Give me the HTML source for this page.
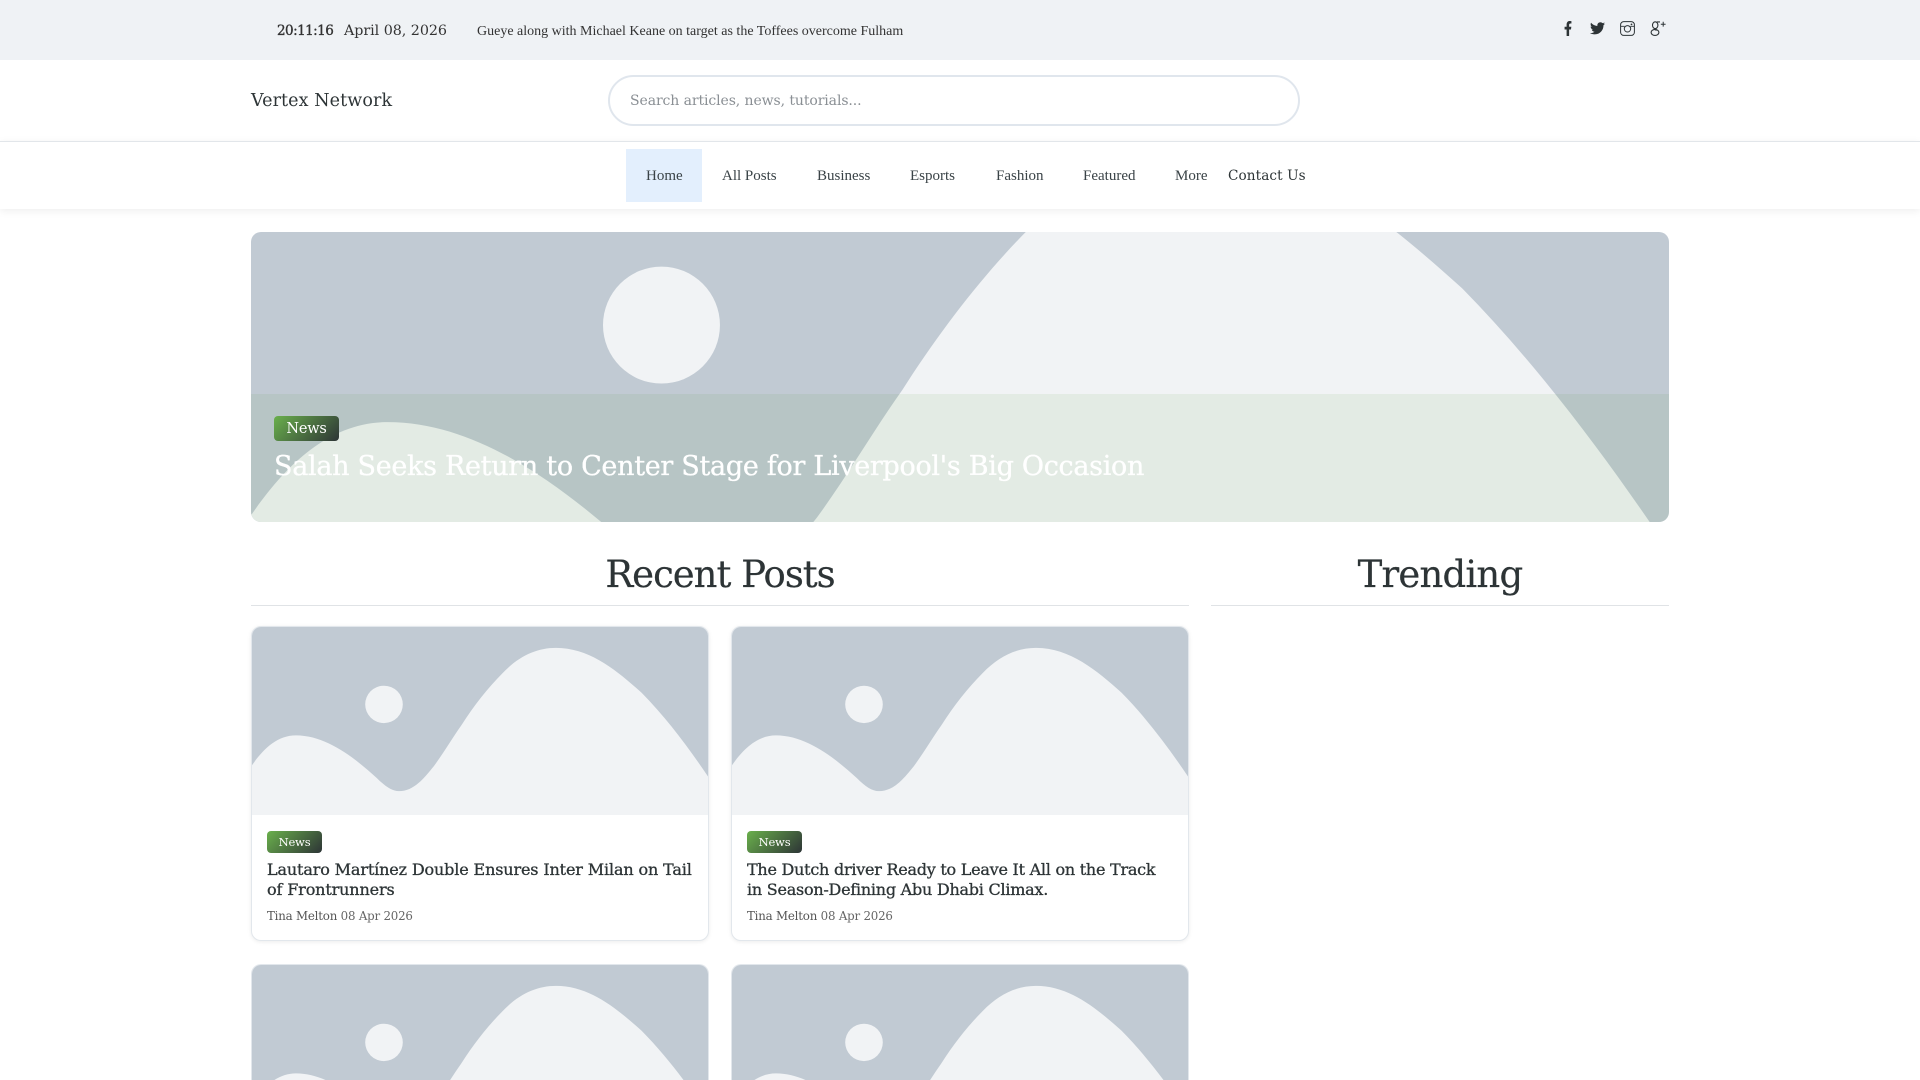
<!DOCTYPE html>
<html lang="en"><head><meta charset="utf-8"><title>Vertex Network</title>
<style>
*{box-sizing:border-box;margin:0;padding:0}
html,body{width:1920px;height:1080px;overflow:hidden;background:#fff}
body{position:relative;font-family:"Liberation Serif",serif;color:#2d3436}
.d{font-family:"DejaVu Serif",serif}
.a{position:absolute;white-space:nowrap}
#top{left:0;top:0;width:1920px;height:60px;background:#eff2f5;box-shadow:0 1px 2px rgba(0,0,0,.04)}
#head{left:0;top:60px;width:1920px;height:81px;background:#fff}
#nav{left:0;top:141px;width:1920px;height:68px;background:#fff;border-top:1px solid #e2e6ea;box-shadow:0 2px 8px rgba(0,0,0,.07)}
#search{left:608px;top:75px;width:692px;height:51px;border:2px solid #e0e6ed;border-radius:26px}
.n{font-size:15px;top:167px;line-height:18px;color:#3a4347}
#home{left:626px;top:149px;width:76px;height:53px;background:#e3effd}
#hero{left:251px;top:232px;width:1418px;height:290px;border-radius:10px;overflow:hidden}
#hero svg{position:absolute;left:0;top:0;width:100%;height:100%;display:block}
#ov{position:absolute;left:0;top:162px;width:100%;height:128px;background:rgba(85,150,55,.085)}
.badge{background:linear-gradient(135deg,#6ab04c,#2d3436);color:#fff;border-radius:4px;text-align:center;font-family:"DejaVu Serif",serif}
h2{font-family:"DejaVu Serif",serif;font-weight:400;font-size:37px;letter-spacing:-1px;color:#2d3436;line-height:44px;text-align:center;position:absolute;top:553px;white-space:nowrap;-webkit-text-stroke:.2px #2d3436}
.rule{height:1px;background:#e0e3e6;top:605px}
.card{width:458px;border:1px solid #e2e7ec;border-radius:10px;background:#fff;box-shadow:0 1px 4px rgba(0,0,0,.08);overflow:hidden}
.card svg{display:block;width:456px;height:188px}
.card.cut{height:116px;border-bottom:0;border-radius:10px 10px 0 0;box-shadow:none}
.card.cut svg{height:115px}
.card .badge{position:absolute;left:15px;top:204px;width:55px;height:22px;font-size:11.5px;line-height:22px;letter-spacing:-.2px}
.card h3{position:absolute;left:15px;top:233px;font-family:"DejaVu Serif",serif;font-weight:400;font-size:16px;line-height:20px;color:#2d3436;white-space:nowrap;-webkit-text-stroke:.3px #2d3436}
.card p{position:absolute;left:15px;top:280px;font-family:"DejaVu Serif",serif;font-size:11.8px;line-height:18px;color:#666;letter-spacing:-.2px;white-space:nowrap}
.card p b{font-weight:400;color:#555}
</style></head><body>
<svg width="0" height="0" style="position:absolute"><defs>
<g id="ph"><rect y="-2" width="456" height="193" fill="#c1cad3"/><circle cx="132" cy="77.8" r="18.8" fill="#f1f3f5"/>
<path fill="#f1f3f5" d="M0 139C11 123 25 109 44 109C74 109 102 131 125 152C133 160 140 165 147 165C162 165 172 152 182 139.7C192 126 200 112 209.5 98.6C222 79 236 61 250.5 46.5C267 29 285 21 304 21C338 21 365 44 389.5 66C415 92 437 122 456.5 151V191H0Z"/></g>
</defs></svg>

<div id="top" class="a"></div>
<div class="a d" style="left:277px;top:22px;font-size:13.5px;line-height:18px;letter-spacing:-.55px;color:#333;-webkit-text-stroke:.35px #333">20:11:16</div>
<div class="a d" style="left:344px;top:22px;font-size:14.3px;line-height:18px;letter-spacing:-.05px;color:#333">April 08, 2026</div>
<div class="a" style="left:477px;top:23px;font-size:14px;line-height:17px;color:#333">Gueye along with Michael Keane on target as the Toffees overcome Fulham</div>

<svg class="a" style="left:1564px;top:21px" width="8" height="15" viewBox="0 0 320 512" preserveAspectRatio="none"><path fill="#2d3436" d="M279.14 288l14.22-92.66h-88.91v-60.13c0-25.35 12.42-50.06 52.24-50.06h40.42V6.26S260.43 0 225.36 0c-73.22 0-121.08 44.38-121.08 124.72v70.62H22.89V288h81.39v224h100.17V288z"/></svg>
<svg class="a" style="left:1590px;top:22px" width="15" height="13" viewBox="0 0 512 430"><path transform="translate(0 -48)" fill="#2d3436" d="M459.37 151.716c.325 4.548.325 9.097.325 13.645 0 138.72-105.583 298.558-298.558 298.558-59.452 0-114.68-17.219-161.137-47.106 8.447.974 16.568 1.299 25.34 1.299 49.055 0 94.213-16.568 130.274-44.832-46.132-.975-84.792-31.188-98.112-72.772 6.498.974 12.995 1.624 19.818 1.624 9.421 0 18.843-1.3 27.614-3.573-48.081-9.747-84.143-51.98-84.143-102.985v-1.299c13.969 7.797 30.214 12.67 47.431 13.319-28.264-18.843-46.781-51.005-46.781-87.391 0-19.492 5.197-37.36 14.294-52.954 51.655 63.675 129.3 105.258 216.365 109.807-1.624-7.797-2.599-15.918-2.599-24.04 0-57.828 46.782-104.934 104.934-104.934 30.213 0 57.502 12.67 76.67 33.137 23.715-4.548 46.456-13.32 66.599-25.34-7.798 24.366-24.366 44.833-46.132 57.827 21.117-2.273 41.584-8.122 60.426-16.243-14.292 20.791-32.161 39.308-52.628 54.253z"/></svg>
<svg class="a" style="left:1620px;top:21px" width="15" height="15" viewBox="0 0 15 15" fill="none" stroke="#2d3436"><rect x=".6" y=".6" width="13.8" height="13.8" rx="3.2" stroke-width="1"/><circle cx="7.5" cy="7.8" r="3.2" stroke-width="1"/><path d="M.8 5.3H4.6M10.4 5.3H14.2" stroke-width=".8"/><circle cx="11.5" cy="3.4" r=".9" fill="#2d3436" stroke="none"/></svg>
<svg class="a" style="left:1650px;top:21px" width="16" height="15" viewBox="0 0 16 15" fill="none" stroke="#2d3436" stroke-width="1.1"><ellipse cx="5.2" cy="4.2" rx="2.7" ry="3.4"/><ellipse cx="5" cy="11.4" rx="3.9" ry="3"/><path d="M6.5 7.6C4 8 4 8.6 6.6 9.2M6.8 .9H10"/><path d="M10.8 3.2H15.6M13.2 .8V5.6" stroke-width="1"/></svg>

<div id="head" class="a"></div>
<div class="a d" style="left:251px;top:90px;font-size:17.5px;line-height:22px;letter-spacing:.1px;color:#2d3436">Vertex Network</div>
<div id="search" class="a"></div>
<div class="a d" style="left:630px;top:92px;font-size:14px;line-height:18px;letter-spacing:-.09px;color:#8a8f94">Search articles, news, tutorials...</div>

<div id="nav" class="a"></div>
<div id="home" class="a"></div>
<div class="a n" style="left:646px">Home</div>
<div class="a n" style="left:722px">All Posts</div>
<div class="a n" style="left:817px">Business</div>
<div class="a n" style="left:910px">Esports</div>
<div class="a n" style="left:996px">Fashion</div>
<div class="a n" style="left:1083px">Featured</div>
<div class="a n" style="left:1175px">More</div>
<div class="a d" style="left:1228px;top:167px;font-size:13.6px;line-height:18px;letter-spacing:.1px;color:#2d3436">Contact Us</div>

<div id="hero" class="a">
<svg viewBox="0 0 456 189" preserveAspectRatio="xMidYMid slice"><use href="#ph"/></svg>
<div id="ov"></div>
<div class="a badge" style="left:23px;top:184px;width:65px;height:25px;font-size:14.5px;line-height:26px;letter-spacing:-.2px">News</div>
<div class="a d" style="left:23px;top:216px;font-size:27px;line-height:38px;letter-spacing:-.3px;color:#fff;-webkit-text-stroke:.3px #fff">Salah Seeks Return to Center Stage for Liverpool's Big Occasion</div>
</div>

<h2 style="left:251px;width:938px">Recent Posts</h2>
<h2 style="left:1211px;width:458px;letter-spacing:-.8px">Trending</h2>
<div class="a rule" style="left:251px;width:938px"></div>
<div class="a rule" style="left:1211px;width:458px"></div>

<div class="a card" style="left:251px;top:626px;height:315px"><svg viewBox="0 0 456 189" preserveAspectRatio="none"><use href="#ph"/></svg><span class="badge">News</span><h3 style="letter-spacing:-.14px">Lautaro Martínez Double Ensures Inter Milan on Tail<br>of Frontrunners</h3><p><b>Tina Melton</b> 08 Apr 2026</p></div>
<div class="a card" style="left:731px;top:626px;height:315px"><svg viewBox="0 0 456 189" preserveAspectRatio="none"><use href="#ph"/></svg><span class="badge">News</span><h3 style="letter-spacing:-.25px">The Dutch driver Ready to Leave It All on the Track<br>in Season-Defining Abu Dhabi Climax.</h3><p><b>Tina Melton</b> 08 Apr 2026</p></div>
<div class="a card cut" style="left:251px;top:964px"><svg viewBox="0 0 456 115.6" preserveAspectRatio="none"><use href="#ph"/></svg></div>
<div class="a card cut" style="left:731px;top:964px"><svg viewBox="0 0 456 115.6" preserveAspectRatio="none"><use href="#ph"/></svg></div>
</body></html>
